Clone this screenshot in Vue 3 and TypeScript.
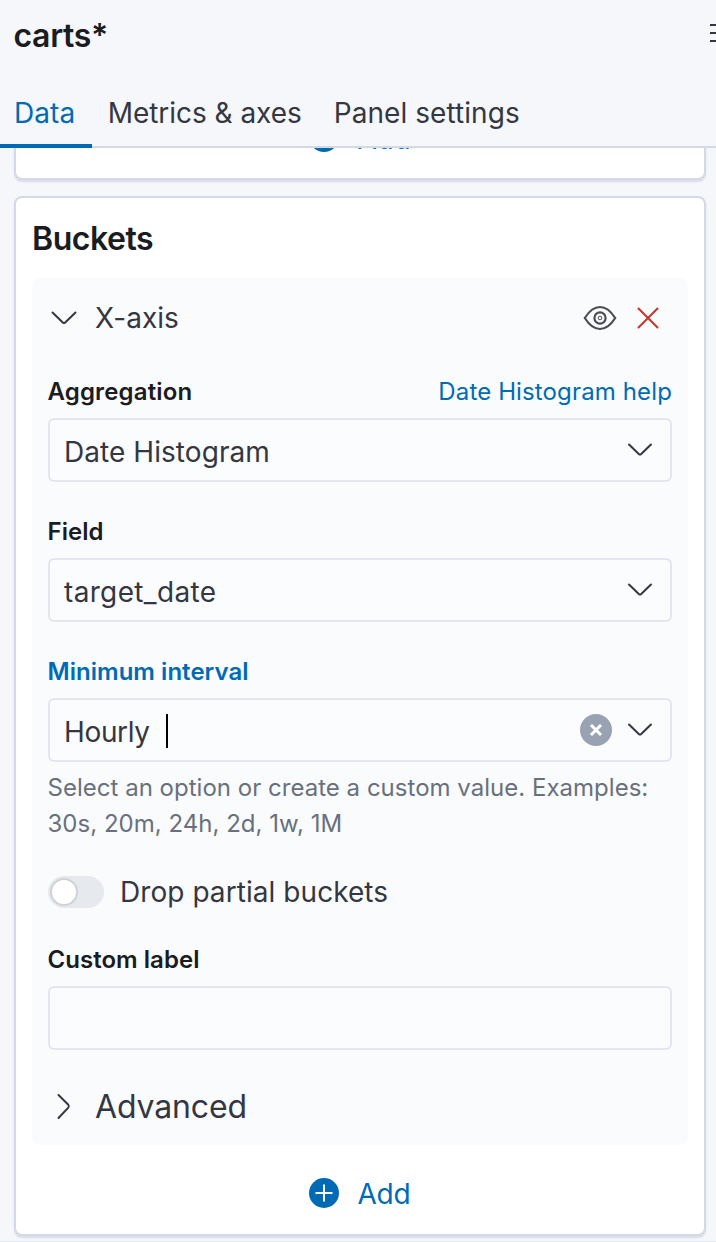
<script setup lang="ts">
import { ref } from 'vue'

interface Tab {
  id: string
  label: string
}

const tabs: Tab[] = [
  { id: 'data', label: 'Data' },
  { id: 'metrics', label: 'Metrics & axes' },
  { id: 'panel', label: 'Panel settings' },
]
const activeTab = ref('data')
const dropPartial = ref(false)
</script>

<template>
  <div class="sidebar">
    <header class="head">
      <div class="title-row">
        <h2 class="title">carts*</h2>
        <svg class="menu" width="8" height="22" viewBox="0 0 8 22">
          <path d="M2 3H8M2 11H8M2 19H8" />
        </svg>
      </div>
      <nav class="tabs">
        <button
          v-for="tab in tabs"
          :key="tab.id"
          class="tab"
          :class="[tab.id, { active: tab.id === activeTab }]"
          @click="activeTab = tab.id"
        >
          <span>{{ tab.label }}</span>
        </button>
      </nav>
    </header>

    <main class="scroll">
      <section class="card previous">
        <button class="add">
          <svg width="32" height="32" viewBox="0 0 32 32">
            <circle cx="16" cy="16" r="15" />
            <path d="M16 7.5V24.5M7.5 16H24.5" />
          </svg>
          <span>Add</span>
        </button>
      </section>

      <section class="card buckets">
        <h3 class="heading">Buckets</h3>

        <div class="agg">
          <div class="agg-head">
            <svg class="chev" width="32" height="32" viewBox="0 0 32 32">
              <path d="M4.5 10.5L14.8 20.4Q16 21.5 17.2 20.4L27.5 10.5" />
            </svg>
            <span class="agg-name">X-axis</span>
            <svg class="eye" width="34" height="32" viewBox="0 0 34 32">
              <path d="M1.8 16C6.5 8.5 11.5 5 17 5S27.5 8.5 32.2 16C27.5 23.5 22.5 27 17 27S6.5 23.5 1.8 16Z" />
              <circle cx="17" cy="16" r="5.6" />
              <circle cx="17" cy="16" r="1.8" class="pupil" />
            </svg>
            <svg class="cross" width="32" height="32" viewBox="0 0 32 32">
              <path d="M6.5 6.5L25.5 25.5M25.5 6.5L6.5 25.5" />
            </svg>
          </div>

          <div class="label-row">
            <label class="label wide">Aggregation</label>
            <a class="help-link">Date Histogram help</a>
          </div>
          <div class="control">
            <span class="value">Date Histogram</span>
            <svg class="chev" width="32" height="32" viewBox="0 0 32 32">
              <path d="M5 10.5L14.8 19.9Q16 21 17.2 19.9L27 10.5" />
            </svg>
          </div>

          <div class="label-row">
            <label class="label">Field</label>
          </div>
          <div class="control">
            <span class="value field-name">target_date</span>
            <svg class="chev" width="32" height="32" viewBox="0 0 32 32">
              <path d="M5 10.5L14.8 19.9Q16 21 17.2 19.9L27 10.5" />
            </svg>
          </div>

          <div class="label-row">
            <label class="label focused">Minimum interval</label>
          </div>
          <div class="control">
            <span class="value typed">Hourly</span>
            <i class="caret"></i>
            <svg class="clear" width="32" height="32" viewBox="0 0 32 32">
              <circle cx="16" cy="16" r="16" />
              <path d="M11 11L21 21M21 11L11 21" />
            </svg>
            <svg class="chev" width="32" height="32" viewBox="0 0 32 32">
              <path d="M5 10.5L14.8 19.9Q16 21 17.2 19.9L27 10.5" />
            </svg>
          </div>
          <p class="hint">Select an option or create a custom value. Examples:<br />30s, 20m, 24h, 2d, 1w, 1M</p>

          <div class="switch-row">
            <button class="switch" :class="{ on: dropPartial }" @click="dropPartial = !dropPartial">
              <i class="thumb"></i>
            </button>
            <span class="switch-label">Drop partial buckets</span>
          </div>

          <div class="label-row custom">
            <label class="label">Custom label</label>
          </div>
          <div class="control"></div>

          <div class="advanced">
            <svg class="chev" width="32" height="32" viewBox="0 0 32 32">
              <path d="M10.5 4L20.3 13.8Q21.5 15.2 20.3 16.6L10.5 27" />
            </svg>
            <span>Advanced</span>
          </div>
        </div>

        <button class="add">
          <svg width="32" height="32" viewBox="0 0 32 32">
            <circle cx="16" cy="16" r="15" />
            <path d="M16 7.5V24.5M7.5 16H24.5" />
          </svg>
          <span>Add</span>
        </button>
      </section>
      <div class="bottom-rule"></div>
    </main>
  </div>
</template>

<style>
body {
  margin: 0;
  background: #f5f7fb;
}
</style>

<style scoped>
* {
  box-sizing: border-box;
}

.sidebar {
  width: 716px;
  height: 1242px;
  overflow: hidden;
  display: flex;
  flex-direction: column;
  background: #f5f7fb;
  color: #343741;
  font-family: Inter, 'Liberation Sans', sans-serif;
  font-size: 28px;
  letter-spacing: 0.06px;
}

button {
  padding: 0;
  border: 0;
  background: none;
  color: inherit;
  font: inherit;
  letter-spacing: inherit;
}

svg {
  flex: none;
  display: block;
  fill: none;
}

.head {
  flex: none;
  height: 148px;
  display: flex;
  flex-direction: column;
  justify-content: space-between;
}

.title-row {
  display: flex;
  justify-content: space-between;
  align-items: center;
  height: 70px;
  padding-left: 13.5px;
}

.title {
  margin: 2px 0 0;
  font-size: 32px;
  line-height: 48px;
  font-weight: 600;
  letter-spacing: -0.35px;
  color: #1a1c21;
}

.menu {
  margin-bottom: 4px;
  stroke: #343741;
  stroke-width: 2;
}

.tabs {
  display: flex;
  height: 72px;
  box-shadow: inset 0 -2px 0 #d3dae6;
}

.tab {
  padding: 1px 16px 0;
  color: #343741;
}

.tab.active {
  padding-right: 17px;
  padding-left: 14px;
  color: #006bb4;
  box-shadow: inset 0 -4px 0 #006bb4;
}

.tab.metrics {
  padding-left: 15.5px;
  letter-spacing: -0.04px;
}

.scroll {
  flex: 1;
  min-height: 0;
  overflow: hidden;
  display: flex;
  flex-direction: column;
  gap: 16px;
  padding: 0 10px 0 14px;
}

.card {
  flex: none;
  background: #fff;
  border: 2px solid #d3dae6;
  border-radius: 8px;
  box-shadow: 0 2px 2px rgba(152, 162, 179, 0.3);
}

.previous {
  height: 92px;
  margin-top: -60px;
  padding-top: 30px;
}

.buckets {
  height: 1040px;
  padding: 0 16px;
}

.heading {
  margin: 0;
  height: 80px;
  font-size: 32px;
  line-height: 82px;
  font-weight: 600;
  letter-spacing: -0.45px;
  color: #1a1c21;
}

.agg {
  height: 867px;
  padding: 0 16px;
  border-radius: 8px;
  background: #fafbfd;
}

.agg-head {
  display: flex;
  align-items: center;
  height: 80px;
}

.agg-name {
  margin: 0 auto 0 15px;
}

.chev {
  stroke: #343741;
  stroke-width: 2;
  stroke-linecap: round;
}

.eye {
  margin-right: 15px;
  stroke: #4a4d57;
  stroke-width: 2.2;
}

.pupil {
  stroke-width: 1;
}

.cross {
  margin-right: 8px;
  stroke: #c5352b;
  stroke-width: 2;
  stroke-linecap: round;
}

.label-row {
  display: flex;
  justify-content: space-between;
  height: 60px;
  padding-top: 16px;
  font-size: 24px;
  line-height: 36px;
}

.control + .label-row {
  height: 76px;
  padding-top: 32px;
}

.label {
  margin-left: -0.5px;
  font-weight: 600;
  letter-spacing: 0.03px;
  color: #1a1c21;
}

.label.wide {
  letter-spacing: 0.16px;
}

.help-link {
  letter-spacing: 0.13px;
}

.label.focused,
.help-link {
  color: #006bb4;
}

.control {
  display: flex;
  align-items: center;
  height: 64px;
  padding: 0 14px;
  border: 2px solid #e3e6f0;
  border-radius: 6px;
  background: #fbfcfe;
}

.value {
  margin-right: auto;
  padding-top: 4px;
}

.field-name {
  letter-spacing: 0.34px;
}

.typed {
  margin-right: 0;
  letter-spacing: -0.35px;
}

.caret {
  width: 2px;
  height: 34px;
  margin: 2px auto 0 16px;
  background: #000;
}

.clear {
  margin-right: 12px;
  fill: #98a2b3;
}

.clear path {
  stroke: #fff;
  stroke-width: 3;
}

.hint {
  margin: 8px 0 0 -0.5px;
  font-size: 24px;
  line-height: 36px;
  letter-spacing: 0.02px;
  color: #69707d;
}

.switch-row {
  display: flex;
  align-items: center;
  height: 40px;
  margin-top: 30px;
}

.switch {
  width: 56px;
  height: 32px;
  padding: 2px;
  border-radius: 16px;
  background: #e6e9ee;
}

.switch.on {
  background: #006bb4;
}

.thumb {
  display: block;
  width: 28px;
  height: 28px;
  border: 2px solid #d0d2d8;
  border-radius: 50%;
  background: #fff;
}

.switch-label {
  margin-left: 16px;
}

.label-row.custom {
  height: 74px;
  padding-top: 30px;
}

.advanced {
  display: flex;
  align-items: center;
  gap: 15px;
  height: 95px;
  padding-top: 18px;
  font-size: 32px;
  letter-spacing: -0.14px;
}

.add {
  display: flex;
  align-items: center;
  justify-content: center;
  gap: 17px;
  width: 100%;
  height: 34px;
  padding-right: 1px;
  color: #006bb4;
  letter-spacing: -0.14px;
}

.add span {
  margin-top: 2px;
}

.previous .add span {
  margin-top: 4px;
}

.buckets .add {
  margin-top: 31px;
}

.add svg {
  fill: #006bb4;
}

.add path {
  stroke: #fff;
  stroke-width: 2;
}

.bottom-rule {
  flex: none;
  height: 2px;
  margin: -11px -10px 0 -14px;
  background: #e4e8f0;
}
</style>
